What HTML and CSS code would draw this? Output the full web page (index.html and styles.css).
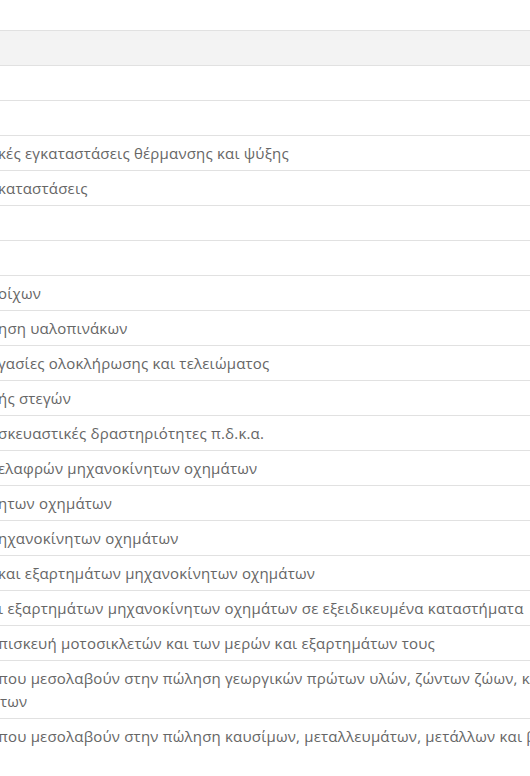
FILE: index.html
```html
<!DOCTYPE html>
<html lang="el">
<head>
<meta charset="utf-8">
<title>ΚΑΔ</title>
<link rel="stylesheet" href="styles.css">
</head>
<body>
<div class="page">
  <div class="scroller">
    <table class="kad">
      <thead>
        <tr><th>&nbsp;</th></tr>
      </thead>
      <tbody>
        <tr><td>&nbsp;</td></tr>
        <tr><td>&nbsp;</td></tr>
        <tr><td>κές εγκαταστάσεις θέρμανσης και ψύξης</td></tr>
        <tr><td>καταστάσεις</td></tr>
        <tr><td>&nbsp;</td></tr>
        <tr><td>&nbsp;</td></tr>
        <tr><td>οίχων</td></tr>
        <tr><td>ηση υαλοπινάκων</td></tr>
        <tr><td>γασίες ολοκλήρωσης και τελειώματος</td></tr>
        <tr><td>ής στεγών</td></tr>
        <tr><td>σκευαστικές δραστηριότητες π.δ.κ.α.</td></tr>
        <tr><td>ελαφρών μηχανοκίνητων οχημάτων</td></tr>
        <tr><td>ητων οχημάτων</td></tr>
        <tr><td>ηχανοκίνητων οχημάτων</td></tr>
        <tr><td>και εξαρτημάτων μηχανοκίνητων οχημάτων</td></tr>
        <tr><td>ι εξαρτημάτων μηχανοκίνητων οχημάτων σε εξειδικευμένα καταστήματα</td></tr>
        <tr><td>πισκευή μοτοσικλετών και των μερών και εξαρτημάτων τους</td></tr>
        <tr><td>που μεσολαβούν στην πώληση γεωργικών πρώτων υλών, ζώντων ζώων, κλωστικών πρώτων υλών<br>των</td></tr>
        <tr><td>που μεσολαβούν στην πώληση καυσίμων, μεταλλευμάτων, μετάλλων και βιομηχανικών χημικών προϊόντων<br>&nbsp;</td></tr>
      </tbody>
    </table>
  </div>
</div>
</body>
</html>
```

FILE: styles.css
```css
html, body {
  margin: 0;
  padding: 0;
  background: #ffffff;
  overflow: hidden;
}

.page {
  padding-top: 30px;
  width: 530px;
  overflow: hidden;
}

.scroller {
  width: 530px;
  overflow: hidden;
}

.kad {
  width: 1200px;
  border-collapse: collapse;
  font-family: "Open Sans", "Noto Sans", sans-serif;
  font-size: 15px;
  letter-spacing: 0.2px;
  color: #666666;
}

.kad th,
.kad td {
  text-align: left;
  white-space: nowrap;
  font-weight: normal;
  line-height: 23px;
  padding: 6px 0 5px 0;
  border-top: 1px solid #e1e1e1;
  border-bottom: 1px solid #e1e1e1;
}

.kad thead th {
  background: #f3f3f3;
}

.kad td {
  text-indent: -2px;
}
```
